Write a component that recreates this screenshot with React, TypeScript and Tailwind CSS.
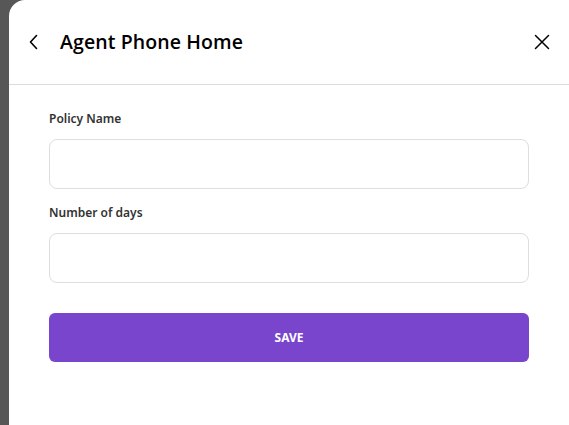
export default function App() {
  return (
    <div className="flex h-[425px] w-[569px] overflow-hidden bg-[#575757]">
      <div className="ml-[9px] flex flex-1 flex-col rounded-tl-2xl bg-white">
        <header className="flex h-[85px] items-center border-b border-[#dcdcdc] pl-[13px] pr-[15px]">
          <button className="flex h-6 w-6 items-center justify-center text-black">
            <svg width="12" height="16" viewBox="0 0 12 16" fill="none">
              <path d="M8.5 1.5 2.5 8l6 6.5" stroke="currentColor" strokeWidth="1.6" strokeLinecap="round" strokeLinejoin="round" />
            </svg>
          </button>
          <h1 className="ml-[14px] flex-1 font-['Open_Sans',sans-serif] text-[19.5px] font-semibold tracking-[0.1px] text-black">
            Agent Phone Home
          </h1>
          <button className="flex h-6 w-6 items-center justify-center text-black">
            <svg width="16" height="16" viewBox="0 0 16 16" fill="none">
              <path d="M1.5 1.5l13 13M14.5 1.5l-13 13" stroke="currentColor" strokeWidth="1.5" strokeLinecap="round" />
            </svg>
          </button>
        </header>

        <form className="flex flex-col px-10 pt-[25px] font-['Noto_Sans',sans-serif]">
          <label className="text-[12px] font-semibold text-[#333]">Policy Name</label>
          <input className="mt-[11px] h-[50px] w-[480px] rounded-lg border border-[#dedede] bg-white px-3 outline-none" />

          <label className="mt-[15px] text-[12px] font-semibold text-[#333]">Number of days</label>
          <input className="mt-[11px] h-[50px] w-[480px] rounded-lg border border-[#dedede] bg-white px-3 outline-none" />

          <button
            type="button"
            className="mt-[30px] h-[49px] w-[480px] rounded-md bg-[#7845cc] text-[12px] font-bold text-white"
          >
            SAVE
          </button>
        </form>
      </div>
    </div>
  );
}
